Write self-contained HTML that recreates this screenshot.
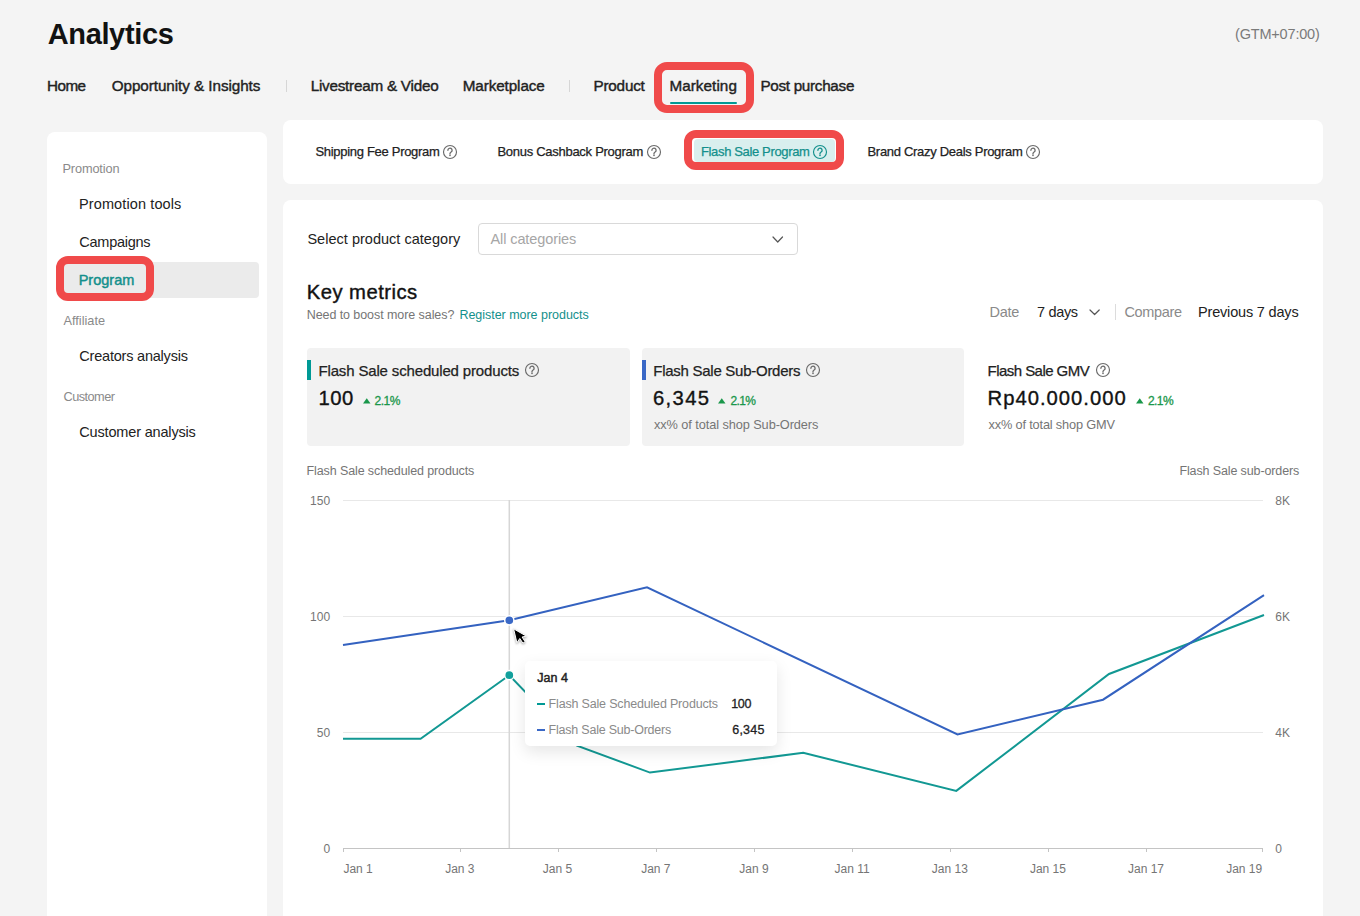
<!DOCTYPE html>
<html><head><meta charset="utf-8"><title>Analytics</title>
<style>
html,body{margin:0;padding:0;}
body{width:1360px;height:916px;overflow:hidden;background:#f4f4f4;position:relative;font-family:"Liberation Sans",sans-serif;}
.a{position:absolute;box-sizing:content-box;}
.t{position:absolute;white-space:nowrap;line-height:1;}
</style></head><body>
<div class="a" style="left:286px;top:80px;width:1px;height:12px;background:#d6d6d6"></div>
<div class="a" style="left:569px;top:80px;width:1px;height:12px;background:#d6d6d6"></div>
<div class="a" style="left:670.4px;top:101.5px;width:66.5px;height:2px;background:#009995;border-radius:1px"></div>
<div class="a" style="left:47px;top:132px;width:220px;height:820px;background:#fff;border-radius:8px"></div>
<div class="a" style="left:283px;top:120px;width:1040px;height:63.5px;background:#fff;border-radius:8px"></div>
<div class="a" style="left:283px;top:200px;width:1040px;height:760px;background:#fff;border-radius:8px"></div>
<div class="a" style="left:60px;top:262px;width:199px;height:36px;background:#ebebeb;border-radius:4px"></div>
<div class="a" style="left:693.5px;top:139px;width:141.5px;height:22.7px;background:#d9efee;border-radius:4px"></div>
<div class="a" style="left:478.25px;top:223.25px;width:317.25px;height:29.25px;border:1px solid #d9d9d9;border-radius:4px"></div>
<svg class="a" style="left:771px;top:234.75px" width="13.5" height="9.0"><path d="M2 2 L6.75 7.0 L11.5 2" fill="none" stroke="#555" stroke-width="1.2" stroke-linecap="round" stroke-linejoin="round"/></svg>
<svg class="a" style="left:1088.4px;top:307.75px" width="13.199999999999818" height="8.5"><path d="M2 2 L6.599999999999909 6.5 L11.199999999999818 2" fill="none" stroke="#555" stroke-width="1.2" stroke-linecap="round" stroke-linejoin="round"/></svg>
<div class="a" style="left:1115px;top:304px;width:1px;height:16px;background:#dcdcdc"></div>
<div class="a" style="left:307px;top:348px;width:322.5px;height:97.5px;background:#f2f2f2;border-radius:4px"></div>
<div class="a" style="left:641.75px;top:348px;width:322.5px;height:97.5px;background:#f2f2f2;border-radius:4px"></div>
<div class="a" style="left:307px;top:360px;width:4px;height:20px;background:#009995"></div>
<div class="a" style="left:642px;top:360px;width:4px;height:20px;background:#3a68c6"></div>
<svg class="a" style="left:362.5px;top:397.5px" width="8" height="6"><path d="M0 5.5 L3.75 0.3 L7.5 5.5Z" fill="#1a974b"/></svg>
<svg class="a" style="left:718px;top:397.5px" width="8" height="6"><path d="M0 5.5 L3.75 0.3 L7.5 5.5Z" fill="#1a974b"/></svg>
<svg class="a" style="left:1136px;top:397.5px" width="8" height="6"><path d="M0 5.5 L3.75 0.3 L7.5 5.5Z" fill="#1a974b"/></svg>
<svg class="a" style="left:441.80px;top:144.00px" width="16" height="16" viewBox="0 0 16 16"><circle cx="8" cy="8" r="6.5" fill="none" stroke="#6b6b6b" stroke-width="1.15"/><path d="M5.9 6.3a2.1 2.1 0 1 1 3.2 1.75c-.7.45-1.1.8-1.1 1.55v.35" fill="none" stroke="#6b6b6b" stroke-width="1.3" stroke-linecap="round"/><circle cx="8" cy="11.4" r="0.8" fill="#6b6b6b"/></svg>
<svg class="a" style="left:646.00px;top:144.00px" width="16" height="16" viewBox="0 0 16 16"><circle cx="8" cy="8" r="6.5" fill="none" stroke="#6b6b6b" stroke-width="1.15"/><path d="M5.9 6.3a2.1 2.1 0 1 1 3.2 1.75c-.7.45-1.1.8-1.1 1.55v.35" fill="none" stroke="#6b6b6b" stroke-width="1.3" stroke-linecap="round"/><circle cx="8" cy="11.4" r="0.8" fill="#6b6b6b"/></svg>
<svg class="a" style="left:811.80px;top:144.00px" width="16" height="16" viewBox="0 0 16 16"><circle cx="8" cy="8" r="6.5" fill="none" stroke="#13908c" stroke-width="1.15"/><path d="M5.9 6.3a2.1 2.1 0 1 1 3.2 1.75c-.7.45-1.1.8-1.1 1.55v.35" fill="none" stroke="#13908c" stroke-width="1.3" stroke-linecap="round"/><circle cx="8" cy="11.4" r="0.8" fill="#13908c"/></svg>
<svg class="a" style="left:1025.00px;top:144.00px" width="16" height="16" viewBox="0 0 16 16"><circle cx="8" cy="8" r="6.5" fill="none" stroke="#6b6b6b" stroke-width="1.15"/><path d="M5.9 6.3a2.1 2.1 0 1 1 3.2 1.75c-.7.45-1.1.8-1.1 1.55v.35" fill="none" stroke="#6b6b6b" stroke-width="1.3" stroke-linecap="round"/><circle cx="8" cy="11.4" r="0.8" fill="#6b6b6b"/></svg>
<svg class="a" style="left:523.80px;top:361.80px" width="16" height="16" viewBox="0 0 16 16"><circle cx="8" cy="8" r="6.5" fill="none" stroke="#6b6b6b" stroke-width="1.15"/><path d="M5.9 6.3a2.1 2.1 0 1 1 3.2 1.75c-.7.45-1.1.8-1.1 1.55v.35" fill="none" stroke="#6b6b6b" stroke-width="1.3" stroke-linecap="round"/><circle cx="8" cy="11.4" r="0.8" fill="#6b6b6b"/></svg>
<svg class="a" style="left:804.75px;top:361.80px" width="16" height="16" viewBox="0 0 16 16"><circle cx="8" cy="8" r="6.5" fill="none" stroke="#6b6b6b" stroke-width="1.15"/><path d="M5.9 6.3a2.1 2.1 0 1 1 3.2 1.75c-.7.45-1.1.8-1.1 1.55v.35" fill="none" stroke="#6b6b6b" stroke-width="1.3" stroke-linecap="round"/><circle cx="8" cy="11.4" r="0.8" fill="#6b6b6b"/></svg>
<svg class="a" style="left:1095.30px;top:361.80px" width="16" height="16" viewBox="0 0 16 16"><circle cx="8" cy="8" r="6.5" fill="none" stroke="#6b6b6b" stroke-width="1.15"/><path d="M5.9 6.3a2.1 2.1 0 1 1 3.2 1.75c-.7.45-1.1.8-1.1 1.55v.35" fill="none" stroke="#6b6b6b" stroke-width="1.3" stroke-linecap="round"/><circle cx="8" cy="11.4" r="0.8" fill="#6b6b6b"/></svg>
<svg class="a" style="left:0;top:0" width="1360" height="916">
<line x1="343" y1="500.5" x2="1263" y2="500.5" stroke="#e8e8e8" stroke-width="1"/>
<line x1="343" y1="616.5" x2="1263" y2="616.5" stroke="#e8e8e8" stroke-width="1"/>
<line x1="343" y1="732.5" x2="1263" y2="732.5" stroke="#e8e8e8" stroke-width="1"/>
<line x1="343" y1="848.5" x2="1263" y2="848.5" stroke="#c4c4c4" stroke-width="1"/>
<line x1="343.5" y1="848" x2="343.5" y2="852" stroke="#c4c4c4" stroke-width="1"/>
<line x1="460.5" y1="848" x2="460.5" y2="852" stroke="#c4c4c4" stroke-width="1"/>
<line x1="558.5" y1="848" x2="558.5" y2="852" stroke="#c4c4c4" stroke-width="1"/>
<line x1="656.5" y1="848" x2="656.5" y2="852" stroke="#c4c4c4" stroke-width="1"/>
<line x1="754.5" y1="848" x2="754.5" y2="852" stroke="#c4c4c4" stroke-width="1"/>
<line x1="852.5" y1="848" x2="852.5" y2="852" stroke="#c4c4c4" stroke-width="1"/>
<line x1="950.5" y1="848" x2="950.5" y2="852" stroke="#c4c4c4" stroke-width="1"/>
<line x1="1048.5" y1="848" x2="1048.5" y2="852" stroke="#c4c4c4" stroke-width="1"/>
<line x1="1146.5" y1="848" x2="1146.5" y2="852" stroke="#c4c4c4" stroke-width="1"/>
<line x1="1262.5" y1="848" x2="1262.5" y2="852" stroke="#c4c4c4" stroke-width="1"/>
<line x1="509.3" y1="500" x2="509.3" y2="848" stroke="#d6d6d6" stroke-width="1.5"/>
<polyline points="343,738.7 420.6,738.7 509.3,675.2 577,745.6 650,772.6 803.2,752.8 956.3,790.9 1109,674 1264,615" fill="none" stroke="#129893" stroke-width="2" stroke-linejoin="miter"/>
<polyline points="343,645.1 509.3,620.3 647,587.3 957.5,734.5 1103,699.7 1264,595.1" fill="none" stroke="#3462c0" stroke-width="2" stroke-linejoin="miter"/>
<circle cx="509.3" cy="620.3" r="4.6" fill="#3a68c6" stroke="#fff" stroke-width="1.5"/>
<circle cx="509.3" cy="675.2" r="4.6" fill="#12a09c" stroke="#fff" stroke-width="1.5"/>
</svg>
<div class="a" style="left:525px;top:661.3px;width:252px;height:85px;background:#fff;border-radius:5px;box-shadow:0 6px 16px rgba(0,0,0,0.10)"></div>
<div class="a" style="left:537.2px;top:703px;width:7.8px;height:2px;background:#009995"></div>
<div class="a" style="left:537.2px;top:729px;width:7.8px;height:2px;background:#3a68c6"></div>
<div class="t" style="left:47.70px;top:18px;line-height:32px;font-size:29.0px;color:#121212;font-weight:bold;letter-spacing:-0.352px;">Analytics</div>
<div class="t" style="left:1235.00px;top:26px;line-height:16px;font-size:14.5px;color:#7a7a7a;letter-spacing:-0.180px;">(GTM+07:00)</div>
<div class="t" style="left:47.00px;top:77px;line-height:17px;font-size:15.25px;color:#222222;letter-spacing:-0.533px;-webkit-text-stroke:0.4px #222222;">Home</div>
<div class="t" style="left:111.70px;top:77px;line-height:17px;font-size:15.25px;color:#222222;letter-spacing:-0.062px;-webkit-text-stroke:0.4px #222222;">Opportunity &amp; Insights</div>
<div class="t" style="left:310.70px;top:77px;line-height:17px;font-size:15.25px;color:#222222;letter-spacing:-0.234px;-webkit-text-stroke:0.4px #222222;">Livestream &amp; Video</div>
<div class="t" style="left:462.70px;top:77px;line-height:17px;font-size:15.25px;color:#222222;letter-spacing:-0.098px;-webkit-text-stroke:0.4px #222222;">Marketplace</div>
<div class="t" style="left:593.50px;top:77px;line-height:17px;font-size:15.25px;color:#222222;letter-spacing:-0.203px;-webkit-text-stroke:0.4px #222222;">Product</div>
<div class="t" style="left:669.40px;top:77px;line-height:17px;font-size:15.25px;color:#222222;letter-spacing:0.066px;-webkit-text-stroke:0.4px #222222;">Marketing</div>
<div class="t" style="left:760.40px;top:77px;line-height:17px;font-size:15.25px;color:#222222;letter-spacing:-0.292px;-webkit-text-stroke:0.4px #222222;">Post purchase</div>
<div class="t" style="left:315.40px;top:144px;line-height:15px;font-size:13.0px;color:#222222;letter-spacing:-0.297px;-webkit-text-stroke:0.25px #222222;">Shipping Fee Program</div>
<div class="t" style="left:497.40px;top:144px;line-height:15px;font-size:13.0px;color:#222222;letter-spacing:-0.277px;-webkit-text-stroke:0.25px #222222;">Bonus Cashback Program</div>
<div class="t" style="left:701.00px;top:144px;line-height:15px;font-size:13.0px;color:#13908c;letter-spacing:-0.356px;-webkit-text-stroke:0.25px #13908c;">Flash Sale Program</div>
<div class="t" style="left:867.50px;top:144px;line-height:15px;font-size:13.0px;color:#222222;letter-spacing:-0.301px;-webkit-text-stroke:0.25px #222222;">Brand Crazy Deals Program</div>
<div class="t" style="left:62.50px;top:161px;line-height:15px;font-size:12.75px;color:#8a8a8a;letter-spacing:-0.140px;">Promotion</div>
<div class="t" style="left:79.00px;top:196px;line-height:16px;font-size:14.5px;color:#222222;letter-spacing:0.115px;">Promotion tools</div>
<div class="t" style="left:79.30px;top:234px;line-height:16px;font-size:14.5px;color:#222222;letter-spacing:-0.262px;">Campaigns</div>
<div class="t" style="left:78.70px;top:272px;line-height:16px;font-size:14.5px;color:#13908c;letter-spacing:0.013px;-webkit-text-stroke:0.45px #13908c;">Program</div>
<div class="t" style="left:63.50px;top:313px;line-height:15px;font-size:12.75px;color:#8a8a8a;">Affiliate</div>
<div class="t" style="left:79.30px;top:348px;line-height:16px;font-size:14.5px;color:#222222;letter-spacing:-0.210px;">Creators analysis</div>
<div class="t" style="left:63.50px;top:389px;line-height:15px;font-size:12.75px;color:#8a8a8a;letter-spacing:-0.546px;">Customer</div>
<div class="t" style="left:79.30px;top:424px;line-height:16px;font-size:14.5px;color:#222222;letter-spacing:-0.170px;">Customer analysis</div>
<div class="t" style="left:307.40px;top:231px;line-height:16px;font-size:14.5px;color:#222222;letter-spacing:0.023px;">Select product category</div>
<div class="t" style="left:490.50px;top:231px;line-height:16px;font-size:14.5px;color:#a6a6a6;letter-spacing:-0.099px;">All categories</div>
<div class="t" style="left:306.70px;top:281px;line-height:22px;font-size:20.25px;color:#121212;letter-spacing:0.466px;-webkit-text-stroke:0.4px #121212;">Key metrics</div>
<div class="t" style="left:306.70px;top:308px;line-height:14px;font-size:12.5px;color:#757575;letter-spacing:-0.072px;">Need to boost more sales?</div>
<div class="t" style="left:459.40px;top:308px;line-height:14px;font-size:12.5px;color:#13908c;letter-spacing:-0.027px;">Register more products</div>
<div class="t" style="left:989.40px;top:304px;line-height:16px;font-size:14.5px;color:#8a8a8a;letter-spacing:-0.221px;">Date</div>
<div class="t" style="left:1037.00px;top:304px;line-height:16px;font-size:14.5px;color:#222222;letter-spacing:-0.334px;">7 days</div>
<div class="t" style="left:1124.40px;top:304px;line-height:16px;font-size:14.5px;color:#8a8a8a;letter-spacing:-0.345px;">Compare</div>
<div class="t" style="left:1198.00px;top:304px;line-height:16px;font-size:14.5px;color:#222222;letter-spacing:-0.180px;">Previous 7 days</div>
<div class="t" style="left:318.50px;top:362px;line-height:17px;font-size:15.0px;color:#222222;letter-spacing:-0.156px;-webkit-text-stroke:0.25px #222222;">Flash Sale scheduled products</div>
<div class="t" style="left:653.25px;top:362px;line-height:17px;font-size:15.0px;color:#222222;letter-spacing:-0.266px;-webkit-text-stroke:0.25px #222222;">Flash Sale Sub-Orders</div>
<div class="t" style="left:987.60px;top:362px;line-height:17px;font-size:15.0px;color:#222222;letter-spacing:-0.546px;-webkit-text-stroke:0.25px #222222;">Flash Sale GMV</div>
<div class="t" style="left:318.50px;top:387px;line-height:22px;font-size:20.25px;color:#121212;letter-spacing:0.488px;-webkit-text-stroke:0.35px #121212;">100</div>
<div class="t" style="left:653.00px;top:387px;line-height:22px;font-size:20.25px;color:#121212;letter-spacing:1.334px;-webkit-text-stroke:0.35px #121212;">6,345</div>
<div class="t" style="left:987.60px;top:387px;line-height:22px;font-size:20.25px;color:#121212;letter-spacing:0.984px;-webkit-text-stroke:0.35px #121212;">Rp40.000.000</div>
<div class="t" style="left:374.50px;top:394px;line-height:14px;font-size:12.0px;color:#1a974b;letter-spacing:-0.477px;-webkit-text-stroke:0.3px #1a974b;">2.1%</div>
<div class="t" style="left:730.50px;top:394px;line-height:14px;font-size:12.0px;color:#1a974b;letter-spacing:-0.644px;-webkit-text-stroke:0.3px #1a974b;">2.1%</div>
<div class="t" style="left:1148.00px;top:394px;line-height:14px;font-size:12.0px;color:#1a974b;letter-spacing:-0.594px;-webkit-text-stroke:0.3px #1a974b;">2.1%</div>
<div class="t" style="left:654.00px;top:417px;line-height:15px;font-size:12.75px;color:#757575;letter-spacing:-0.080px;">xx% of total shop Sub-Orders</div>
<div class="t" style="left:988.60px;top:417px;line-height:15px;font-size:12.75px;color:#757575;letter-spacing:-0.169px;">xx% of total shop GMV</div>
<div class="t" style="left:306.60px;top:464px;line-height:14px;font-size:12.5px;color:#757575;letter-spacing:-0.114px;">Flash Sale scheduled products</div>
<div class="t" style="left:1179.40px;top:464px;line-height:14px;font-size:12.5px;color:#757575;letter-spacing:-0.121px;">Flash Sale sub-orders</div>
<div class="t" style="left:310.05px;top:494px;line-height:14px;font-size:12px;color:#757575;">150</div>
<div class="t" style="left:310.05px;top:610px;line-height:14px;font-size:12px;color:#757575;">100</div>
<div class="t" style="left:316.73px;top:726px;line-height:14px;font-size:12px;color:#757575;">50</div>
<div class="t" style="left:323.40px;top:842px;line-height:14px;font-size:12px;color:#757575;">0</div>
<div class="t" style="left:1275.30px;top:494px;line-height:14px;font-size:12px;color:#757575;">8K</div>
<div class="t" style="left:1275.30px;top:610px;line-height:14px;font-size:12px;color:#757575;">6K</div>
<div class="t" style="left:1275.30px;top:726px;line-height:14px;font-size:12px;color:#757575;">4K</div>
<div class="t" style="left:1275.30px;top:842px;line-height:14px;font-size:12px;color:#757575;">0</div>
<div class="t" style="left:343.40px;top:862px;line-height:14px;font-size:12px;color:#757575;">Jan 1</div>
<div class="t" style="left:445.16px;top:862px;line-height:14px;font-size:12px;color:#757575;">Jan 3</div>
<div class="t" style="left:542.86px;top:862px;line-height:14px;font-size:12px;color:#757575;">Jan 5</div>
<div class="t" style="left:641.16px;top:862px;line-height:14px;font-size:12px;color:#757575;">Jan 7</div>
<div class="t" style="left:739.26px;top:862px;line-height:14px;font-size:12px;color:#757575;">Jan 9</div>
<div class="t" style="left:834.47px;top:862px;line-height:14px;font-size:12px;color:#757575;">Jan 11</div>
<div class="t" style="left:931.82px;top:862px;line-height:14px;font-size:12px;color:#757575;">Jan 13</div>
<div class="t" style="left:1029.92px;top:862px;line-height:14px;font-size:12px;color:#757575;">Jan 15</div>
<div class="t" style="left:1128.02px;top:862px;line-height:14px;font-size:12px;color:#757575;">Jan 17</div>
<div class="t" style="left:1226.14px;top:862px;line-height:14px;font-size:12px;color:#757575;">Jan 19</div>
<div class="t" style="left:537.20px;top:671px;line-height:14px;font-size:12.5px;color:#222222;letter-spacing:0.018px;-webkit-text-stroke:0.45px #222222;">Jan 4</div>
<div class="t" style="left:548.60px;top:697px;line-height:14px;font-size:12.5px;color:#8a8a8a;letter-spacing:-0.177px;">Flash Sale Scheduled Products</div>
<div class="t" style="left:548.60px;top:723px;line-height:14px;font-size:12.5px;color:#8a8a8a;letter-spacing:-0.224px;">Flash Sale Sub-Orders</div>
<div class="t" style="left:731.20px;top:697px;line-height:14px;font-size:12.5px;color:#222222;letter-spacing:-0.352px;-webkit-text-stroke:0.3px #222222;">100</div>
<div class="t" style="left:732.20px;top:723px;line-height:14px;font-size:12.5px;color:#222222;letter-spacing:0.243px;-webkit-text-stroke:0.3px #222222;">6,345</div>
<svg class="a" style="left:0;top:0" width="1360" height="916"><path d="M513.6 628.8 L516.9 642.8 L519.8 638.5 L522.9 643.2 L525.1 641.7 L522.1 637 L526.5 636.2 Z" fill="#000" stroke="#fff" stroke-width="1" stroke-linejoin="round" style="filter:drop-shadow(0 1px 1.2px rgba(0,0,0,.35))"/></svg>
<div class="a" style="left:654.4px;top:62.1px;width:83.20px;height:35.20px;border:8px solid #f04a4a;border-radius:13px"></div>
<div class="a" style="left:684px;top:130px;width:143.70px;height:23.60px;border:8px solid #f04a4a;border-radius:12px"></div>
<div class="a" style="left:56px;top:256.3px;width:81.60px;height:29.10px;border:8px solid #f04a4a;border-radius:12px"></div>
</body></html>
